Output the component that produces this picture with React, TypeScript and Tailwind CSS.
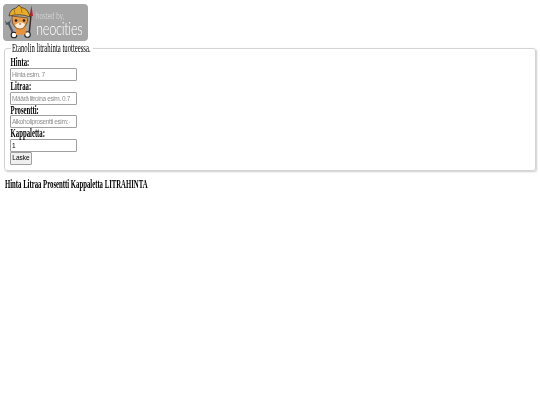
const serif = "font-['Liberation_Serif',serif]";
const squeezed = "block origin-left scale-x-[0.585] whitespace-nowrap";

function NeocitiesBadge() {
  return (
    <div className="flex h-[37px] w-[85px] items-start overflow-hidden rounded-[4px] bg-[#a6a6a6]">
      <svg viewBox="0 0 33 37" className="h-[37px] w-[33px] shrink-0">
        {/* brush */}
        <path d="M26 31 L28 11" stroke="#3a2a24" strokeWidth="1.5" />
        <path d="M26.6 12 L28.4 1.5 L30 12 Z" fill="#a4273a" />
        <circle cx="24.5" cy="30.5" r="2.8" fill="#fff" stroke="#222" strokeWidth="1.1" />
        {/* wrench */}
        <path d="M5 18 L10 29" stroke="#4e555e" strokeWidth="2" />
        <path d="M2 16 L3 21 L7 20 L8 15 L6 18 L4 19 Z" fill="#4e555e" />
        <circle cx="11" cy="31" r="2.8" fill="#fff" stroke="#222" strokeWidth="1.1" />
        {/* body */}
        <path d="M13 22 L22 22 L23 30 L13 31 Z" fill="#e9923a" />
        {/* head */}
        <path d="M9 15 Q9 24 17 25 Q24 24 25 14 L9 12 Z" fill="#ea9a45" stroke="#3a2a1a" strokeWidth="0.6" />
        <path d="M12 21 Q17 16 22 20 Q21 24.5 17 24.5 Q13.5 24.5 12 21 Z" fill="#fbeedb" />
        <circle cx="13" cy="16.5" r="1.3" fill="#222" />
        <circle cx="21" cy="16.5" r="1.3" fill="#222" />
        <path d="M16 19.5 L18.5 19.5 L17 21 Z" fill="#8a3a2a" />
        {/* helmet */}
        <path d="M6 12 Q7 5 13 4 L16 1 L18 3.5 Q25 4 27 13 Q17 9 6 12 Z" fill="#e8ac2c" stroke="#3a2a1a" strokeWidth="0.7" />
        <path d="M11 5 L12 10 M18 4 L19 9" stroke="#a8730f" strokeWidth="0.9" />
      </svg>
      <div className="flex flex-col pt-[7px] font-['Lato',sans-serif] font-light">
        <span className="origin-left scale-x-[0.7] whitespace-nowrap text-[9px] leading-[10px] text-[#e6e6e6]">hosted by,</span>
        <span className="origin-left scale-x-[0.71] whitespace-nowrap text-[18px] leading-[15px] tracking-[-0.4px] text-white">neocities</span>
      </div>
    </div>
  );
}

function Field({ label, placeholder, value }: { label: string; placeholder?: string; value?: string }) {
  return (
    <div className="flex flex-col items-start">
      <label className={`${serif} ${squeezed} pl-[1px] text-[11.5px] font-bold leading-[10.8px] text-black`}>{label}</label>
      <input
        readOnly
        placeholder={placeholder}
        value={value}
        className="box-border h-[13px] w-[67px] rounded-[1px] border border-[#a0a0a0] bg-white pl-[1px] pr-[6px] font-['Liberation_Sans',sans-serif] text-[6.5px] tracking-[-0.4px] text-black placeholder:text-[#8f8f8f]"
      />
    </div>
  );
}

export default function App() {
  return (
    <div className="min-h-[405px] w-[540px] bg-white blur-[0.5px]">
      <div className="pl-[3px] pt-[4px]">
        <NeocitiesBadge />
      </div>
      <div className="px-[4px] pt-[1px]">
        <fieldset className="rounded-[3px] border border-[#d4d4d4] px-[5px] pb-[5px] shadow-[1px_1px_2px_rgba(0,0,0,0.2)]">
          <legend className="ml-[1px] w-[82px] px-[1px]">
            <span className={`${serif} ${squeezed} text-[11.5px] leading-[12px] text-black`}>
              Etanolin litrahinta tuotteessa.
            </span>
          </legend>
          <div className="flex flex-col pt-[3px]">
            <Field label="Hinta:" placeholder="Hinta esim. 7" />
            <Field label="Litraa:" placeholder="Määrä litroina esim. 0.7" />
            <Field label="Prosentti:" placeholder="Alkoholiprosentti esim: 40" />
            <Field label="Kappaletta:" value="1" />
          </div>
          <button className="block h-[13px] w-[22px] rounded-[1px] border border-[#a0a0a0] bg-[#efefef] font-['Liberation_Sans',sans-serif] text-[6.5px] leading-none text-black">
            Laske
          </button>
        </fieldset>
      </div>
      <div className="pl-[5px] pt-[7px]">
        <p className={`${serif} ${squeezed} text-[11.5px] font-bold leading-[12px] text-black`}>
          Hinta Litraa Prosentti Kappaletta LITRAHINTA
        </p>
      </div>
    </div>
  );
}
